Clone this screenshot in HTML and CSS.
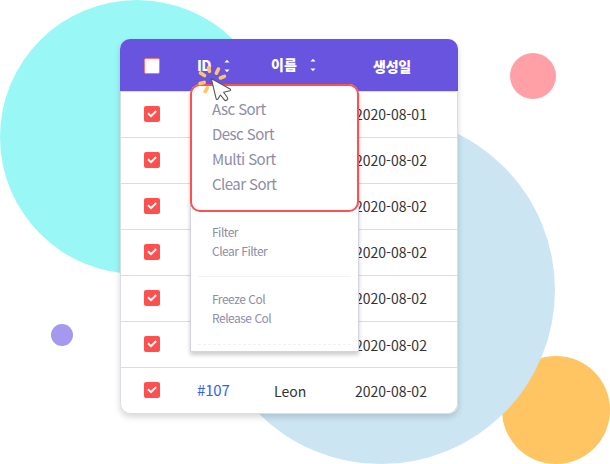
FILE: index.html
```html
<!DOCTYPE html>
<html lang="ko">
<head>
<meta charset="utf-8">
<title>Grid</title>
<link rel="stylesheet" href="styles.css">
</head>
<body>
<div class="scene">
  <svg class="backdrop" width="610" height="464" viewBox="0 0 610 464">
    <circle cx="137" cy="137" r="137" fill="#99f8f6"/>
    <circle cx="556" cy="410" r="54" fill="#ffc563"/>
    <circle cx="381" cy="290" r="174" fill="#cce5f3"/>
    <circle cx="533" cy="76" r="23" fill="#ff9fa6"/>
    <circle cx="62" cy="335" r="11" fill="#a499ee"/>
  </svg>
  <div class="card">
    <div class="row head">
      <span class="box empty"></span>
      <span class="id"><span class="label">ID</span><svg class="sort" width="6" height="14" viewBox="0 0 6 14"><path d="M.5 3.5 3 .7l2.5 2.8zM.5 10.5h5L3 13.3z"/></svg></span>
      <span class="name"><span class="label">이름</span><svg class="sort" width="6" height="14" viewBox="0 0 6 14"><path d="M.5 3.5 3 .7l2.5 2.8zM.5 10.5h5L3 13.3z"/></svg></span>
      <span class="date">생성일</span>
    </div>
    <div class="row"><span class="box"><svg viewBox="0 0 16 16"><path d="M4 7.3l3 2.9L12.2 5"/></svg></span><span class="date">2020-08-01</span></div>
    <div class="row"><span class="box"><svg viewBox="0 0 16 16"><path d="M4 7.3l3 2.9L12.2 5"/></svg></span><span class="date">2020-08-02</span></div>
    <div class="row"><span class="box"><svg viewBox="0 0 16 16"><path d="M4 7.3l3 2.9L12.2 5"/></svg></span><span class="date">2020-08-02</span></div>
    <div class="row"><span class="box"><svg viewBox="0 0 16 16"><path d="M4 7.3l3 2.9L12.2 5"/></svg></span><span class="date">2020-08-02</span></div>
    <div class="row"><span class="box"><svg viewBox="0 0 16 16"><path d="M4 7.3l3 2.9L12.2 5"/></svg></span><span class="date">2020-08-02</span></div>
    <div class="row low"><span class="box"><svg viewBox="0 0 16 16"><path d="M4 7.3l3 2.9L12.2 5"/></svg></span><span class="date">2020-08-02</span></div>
    <div class="row low"><span class="box"><svg viewBox="0 0 16 16"><path d="M4 7.3l3 2.9L12.2 5"/></svg></span><span class="id">#107</span><span class="name">Leon</span><span class="date">2020-08-02</span></div>
  </div>
  <div class="menu">
    <ul class="sorts"><li>Asc Sort</li><li>Desc Sort</li><li>Multi Sort</li><li>Clear Sort</li></ul>
    <ul class="group"><li>Filter</li><li>Clear Filter</li></ul>
    <ul class="group last"><li>Freeze Col</li><li>Release Col</li></ul>
  </div>
  <svg class="cursor" width="40" height="42" viewBox="0 0 40 42">
    <path d="M5.5 9.9l4 2.7M13.6 4.7l.9 3.6M23.4 6l-2 4.2M29.4 13.3l-4 1.7M9.2 19.4l-4.2 1.2M12.3 24.9l-2.1 3.7" fill="none" stroke="#ffc563" stroke-width="3.6" stroke-linecap="round"/>
    <path d="M16.2 15.4l5 20.4c.2.9 1.1 1 1.6.3l2.6-4.1 4 4.9c1.4 1.7 4.3-.6 3-2.4l-3.8-5.3 6.3-1.5c1-.3 1-1.2.2-1.7z" fill="#fff" stroke="#555" stroke-width="1.1" stroke-linejoin="round"/>
  </svg>
</div>
</body>
</html>
```

FILE: styles.css
```css
* { box-sizing: border-box; }
body { margin: 0; background: #fff; font-family: "Noto Sans CJK KR", sans-serif; }
.scene { position: relative; width: 610px; height: 464px; padding: 39px 0 0 120px; overflow: hidden; }
.backdrop { position: absolute; inset: 0; }
.card {
  position: relative;
  width: 338px;
  height: 375px;
  border-radius: 10px;
  background: #fff;
  box-shadow: inset 0 0 0 1px #dcdde2, 0 3px 6px rgba(0, 0, 0, .16);
  overflow: hidden;
}
.row {
  display: grid;
  grid-template-columns: 23px 53px 74px 84px 72px;
  align-items: center;
  height: 46px;
  margin: 0 1px;
  padding-bottom: 1px;
  border-top: 1px solid #dcdde0;
  font-size: 14px;
  line-height: 20px;
  color: #333;
}
.head {
  grid-template-columns: 24px 53px 74px 84px 72px;
  height: 52px;
  margin: 0;
  padding: 1px 0 0;
  border: 0;
  background: #6954e0;
  color: #fff;
  font-weight: 900;
}
.box { grid-column: 2; width: 16px; height: 16px; border-radius: 2px; background: #ff5050; }
.box svg { display: block; fill: none; stroke: #fff; stroke-width: 2; }
.empty { margin-top: 1px; border: 1px solid #ff7474; background: #fff; }
.id { grid-column: 3; display: flex; align-items: center; }
.name { grid-column: 4; display: flex; align-items: center; }
.date { grid-column: 5; }
.row:not(.head) .id { color: #3363ee; font-size: 15px; letter-spacing: -.2px; }
.row:not(.head) .name { padding-left: 3px; }
.head .date { padding: 1px 0 0 18px; letter-spacing: -.2px; }
.head .name { padding-bottom: 1px; }
.head .id .label { width: 14px; padding-bottom: 2px; letter-spacing: -.6px; }
.head .name .label { width: 26px; padding-bottom: 2px; }
.low .date, .low .name { padding-top: 2px; }
.sort { margin-left: 13px; fill: #fff; }
.menu {
  position: absolute;
  left: 190px;
  top: 84px;
  width: 169px;
  height: 268px;
  border: 1px solid #d3d4e2;
  background: #fff;
  border-radius: 10px 10px 0 0;
  box-shadow: 0 3px 4px rgba(0, 0, 0, .2);
  color: #8d8ea5;
}
.sorts, .group { list-style: none; }
.sorts {
  height: 128px;
  margin: -1px;
  padding: 10px 0 0 20px;
  border: 2px solid #ff5050;
  border-radius: 10px;
  font-size: 15px;
  line-height: 25px;
  letter-spacing: -.55px;
}
.group {
  height: 66px;
  margin: 0 7px;
  padding: 11px 0 0 14px;
  border-bottom: 1px solid #f2f2fa;
  font-size: 12px;
  line-height: 19px;
  letter-spacing: -.5px;
}
.last { height: 68px; padding-top: 12px; border-bottom: 1px dashed #f0f0f5; }
.cursor { position: absolute; left: 195px; top: 63px; }
```
